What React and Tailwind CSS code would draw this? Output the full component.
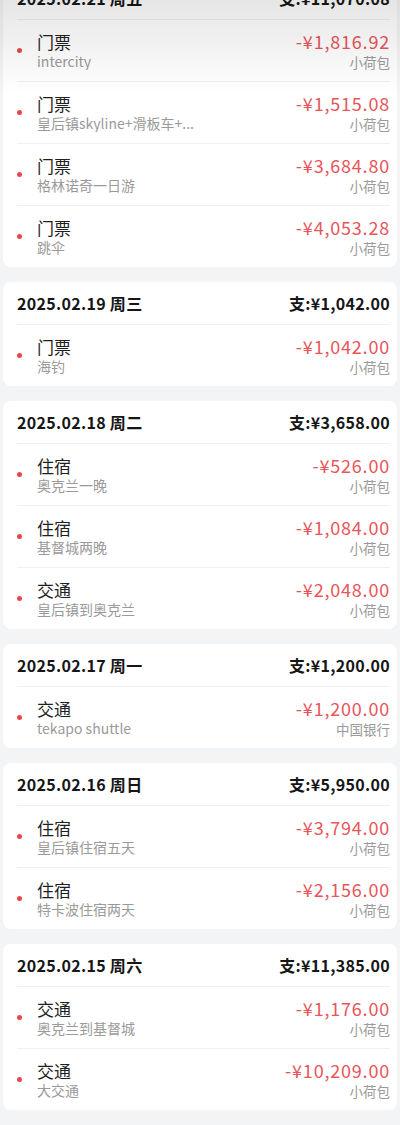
import React from 'react';

const days = [
  {
    date: '2025.02.21 周五',
    total: '支:¥11,070.08',
    items: [
      { title: '门票', note: 'intercity', amount: '-¥1,816.92', account: '小荷包' },
      { title: '门票', note: '皇后镇skyline+滑板车+...', amount: '-¥1,515.08', account: '小荷包' },
      { title: '门票', note: '格林诺奇一日游', amount: '-¥3,684.80', account: '小荷包' },
      { title: '门票', note: '跳伞', amount: '-¥4,053.28', account: '小荷包' },
    ],
  },
  {
    date: '2025.02.19 周三',
    total: '支:¥1,042.00',
    items: [{ title: '门票', note: '海钓', amount: '-¥1,042.00', account: '小荷包' }],
  },
  {
    date: '2025.02.18 周二',
    total: '支:¥3,658.00',
    items: [
      { title: '住宿', note: '奥克兰一晚', amount: '-¥526.00', account: '小荷包' },
      { title: '住宿', note: '基督城两晚', amount: '-¥1,084.00', account: '小荷包' },
      { title: '交通', note: '皇后镇到奥克兰', amount: '-¥2,048.00', account: '小荷包' },
    ],
  },
  {
    date: '2025.02.17 周一',
    total: '支:¥1,200.00',
    items: [{ title: '交通', note: 'tekapo shuttle', amount: '-¥1,200.00', account: '中国银行' }],
  },
  {
    date: '2025.02.16 周日',
    total: '支:¥5,950.00',
    items: [
      { title: '住宿', note: '皇后镇住宿五天', amount: '-¥3,794.00', account: '小荷包' },
      { title: '住宿', note: '特卡波住宿两天', amount: '-¥2,156.00', account: '小荷包' },
    ],
  },
  {
    date: '2025.02.15 周六',
    total: '支:¥11,385.00',
    items: [
      { title: '交通', note: '奥克兰到基督城', amount: '-¥1,176.00', account: '小荷包' },
      { title: '交通', note: '大交通', amount: '-¥10,209.00', account: '小荷包' },
    ],
  },
];

const Row = ({ item }) => (
  <div className="flex items-center h-[62px] border-t border-[#f0f0f0]">
    <span className="w-[5px] h-[5px] rounded-full bg-[#e8474c] mr-[15px] shrink-0" />
    <div className="flex-1 min-w-0">
      <div className="text-[17px] leading-[21px] text-[#1f1f1f]">{item.title}</div>
      <div className="text-[14px] leading-[18px] text-[#9a9a9a] truncate">{item.note}</div>
    </div>
    <div className="text-right">
      <div className="text-[18px] leading-[22px] tracking-[0.8px] text-[#e8555a]">{item.amount}</div>
      <div className="text-[13.5px] leading-[20px] text-[#9a9a9a]">{item.account}</div>
    </div>
  </div>
);

const DayCard = ({ day }) => (
  <div className="mx-[3px] bg-white rounded-[8px] pl-[14px] pr-[7px]">
    <div className="flex items-center justify-between h-[42px] font-bold text-[16px] tracking-[0.3px] text-[#161616]">
      <span>{day.date}</span>
      <span>{day.total}</span>
    </div>
    {day.items.map((item, i) => (
      <Row key={i} item={item} />
    ))}
  </div>
);

export default function App() {
  return (
    <div
      className="relative w-[400px] h-[1125px] overflow-hidden bg-[#f3f4f6]"
      style={{ fontFamily: '"Noto Sans CJK SC", "Noto Sans", sans-serif' }}
    >
      <div className="flex flex-col gap-[15px] -mt-[23px]">
        {days.map((day, i) => (
          <DayCard key={i} day={day} />
        ))}
      </div>
      {/* top fade */}
      <div className="absolute top-0 left-0 right-0 h-[95px] bg-gradient-to-b from-black/10 to-transparent pointer-events-none" />
    </div>
  );
}
